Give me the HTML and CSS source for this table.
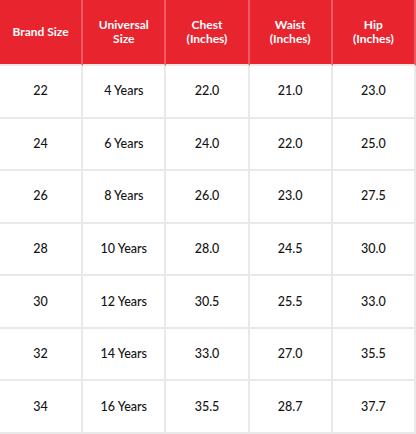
FILE: index.html
```html
<!DOCTYPE html>
<html>
<head>
<meta charset="utf-8">
<link rel="stylesheet" href="styles.css">
</head>
<body>
<div class="chart">
  <div class="cell head">Brand Size</div>
  <div class="cell head">Universal<br>Size</div>
  <div class="cell head">Chest<br>(Inches)</div>
  <div class="cell head">Waist<br>(Inches)</div>
  <div class="cell head">Hip<br>(Inches)</div>

  <div class="cell">22</div><div class="cell">4 Years</div><div class="cell">22.0</div><div class="cell">21.0</div><div class="cell">23.0</div>
  <div class="cell">24</div><div class="cell">6 Years</div><div class="cell">24.0</div><div class="cell">22.0</div><div class="cell">25.0</div>
  <div class="cell">26</div><div class="cell">8 Years</div><div class="cell">26.0</div><div class="cell">23.0</div><div class="cell">27.5</div>
  <div class="cell">28</div><div class="cell">10 Years</div><div class="cell">28.0</div><div class="cell">24.5</div><div class="cell">30.0</div>
  <div class="cell">30</div><div class="cell">12 Years</div><div class="cell">30.5</div><div class="cell">25.5</div><div class="cell">33.0</div>
  <div class="cell">32</div><div class="cell">14 Years</div><div class="cell">33.0</div><div class="cell">27.0</div><div class="cell">35.5</div>
  <div class="cell">34</div><div class="cell">16 Years</div><div class="cell">35.5</div><div class="cell">28.7</div><div class="cell">37.7</div>
</div>
</body>
</html>
```
FILE: styles.css
```css
html, body {
  margin: 0;
  padding: 0;
  background: #ffffff;
}
.chart {
  width: 416px;
  height: 434px;
  display: grid;
  grid-template-columns: repeat(5, 1fr);
  grid-template-rows: 66px repeat(7, 1fr);
  font-family: Lato, "Noto Sans", sans-serif;
}
.cell {
  display: flex;
  align-items: center;
  justify-content: center;
  text-align: center;
  font-size: 12.5px;
  font-weight: 500;
  color: #141414;
  border-right: 2px solid #e9e9e9;
  border-bottom: 2px solid #e9e9e9;
  line-height: 14px;
}
.head {
  background: #e8242f;
  color: #ffffff;
  font-weight: 700;
  font-size: 12px;
  border-right: 2px solid #ee5a61;
  border-bottom: 2px solid #f1e6e6;
}
```
